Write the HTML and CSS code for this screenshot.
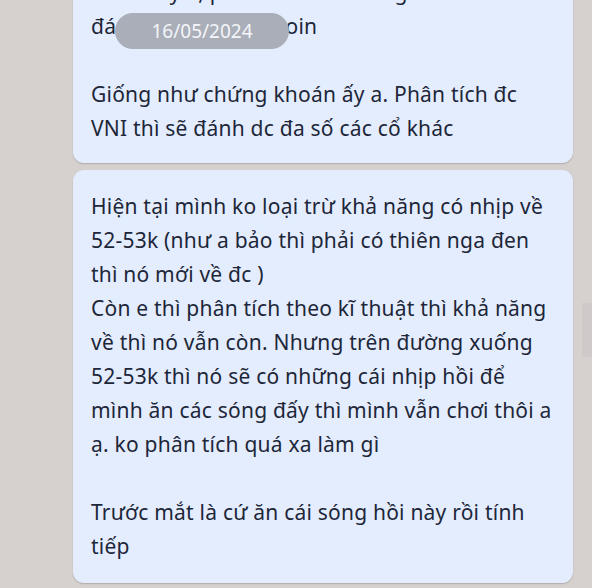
FILE: index.html
```html
<!DOCTYPE html>
<html lang="vi">
<head>
<meta charset="utf-8">
<link rel="stylesheet" href="styles.css">
</head>
<body>
<div class="chat">
  <div class="bubble">Anh thấy a, phải nhìn xu hướng
đánh giá như mọi coin

Giống như chứng khoán ấy a. Phân tích đc
VNI thì sẽ đánh dc đa số các cổ khác</div>
  <div class="bubble">Hiện tại mình ko loại trừ khả năng có nhịp về 52-53k (như a bảo thì phải có thiên nga đen thì nó mới về đc )
Còn e thì phân tích theo kĩ thuật thì khả năng về thì nó vẫn còn. Nhưng trên đường xuống 52-53k thì nó sẽ có những cái nhịp hồi để mình ăn các sóng đấy thì mình vẫn chơi thôi a ạ. ko phân tích quá xa làm gì

Trước mắt là cứ ăn cái sóng hồi này rồi tính tiếp</div>
</div>
<div class="date-pill">16/05/2024</div>
<div class="scroll-thumb"></div>
</body>
</html>
```
FILE: styles.css
```css
html, body {
  margin: 0;
  padding: 0;
}
body {
  width: 592px;
  height: 588px;
  overflow: hidden;
  background: #d6d1cf;
  font-family: "Noto Sans", "Open Sans", sans-serif;
  position: relative;
}
.chat {
  display: flex;
  flex-direction: column;
  gap: 7px;
  width: 500px;
  margin: -43px 0 0 73px;
}
.bubble {
  background: #e4edfd;
  border-radius: 11px;
  padding: 18px 18px 18px 18px;
  font-size: 21px;
  letter-spacing: 0.22px;
  line-height: 34px;
  color: #1d2739;
  white-space: pre-line;
  box-shadow: 0 1px 1.5px rgba(0, 0, 0, 0.18);
}
.bubble + .bubble {
  padding: 19px 18px 20px 18px;
}
.date-pill {
  position: absolute;
  top: 13px;
  left: 115px;
  width: 174px;
  height: 36px;
  border-radius: 18px;
  background: #a9aeb8;
  color: #f4f5f8;
  font-size: 19px;
  line-height: 36px;
  text-align: center;
  font-family: "Noto Sans", "Open Sans", sans-serif;
}
.scroll-thumb {
  position: absolute;
  top: 303px;
  left: 582px;
  width: 10px;
  height: 54px;
  background: #cfcac9;
}
```
